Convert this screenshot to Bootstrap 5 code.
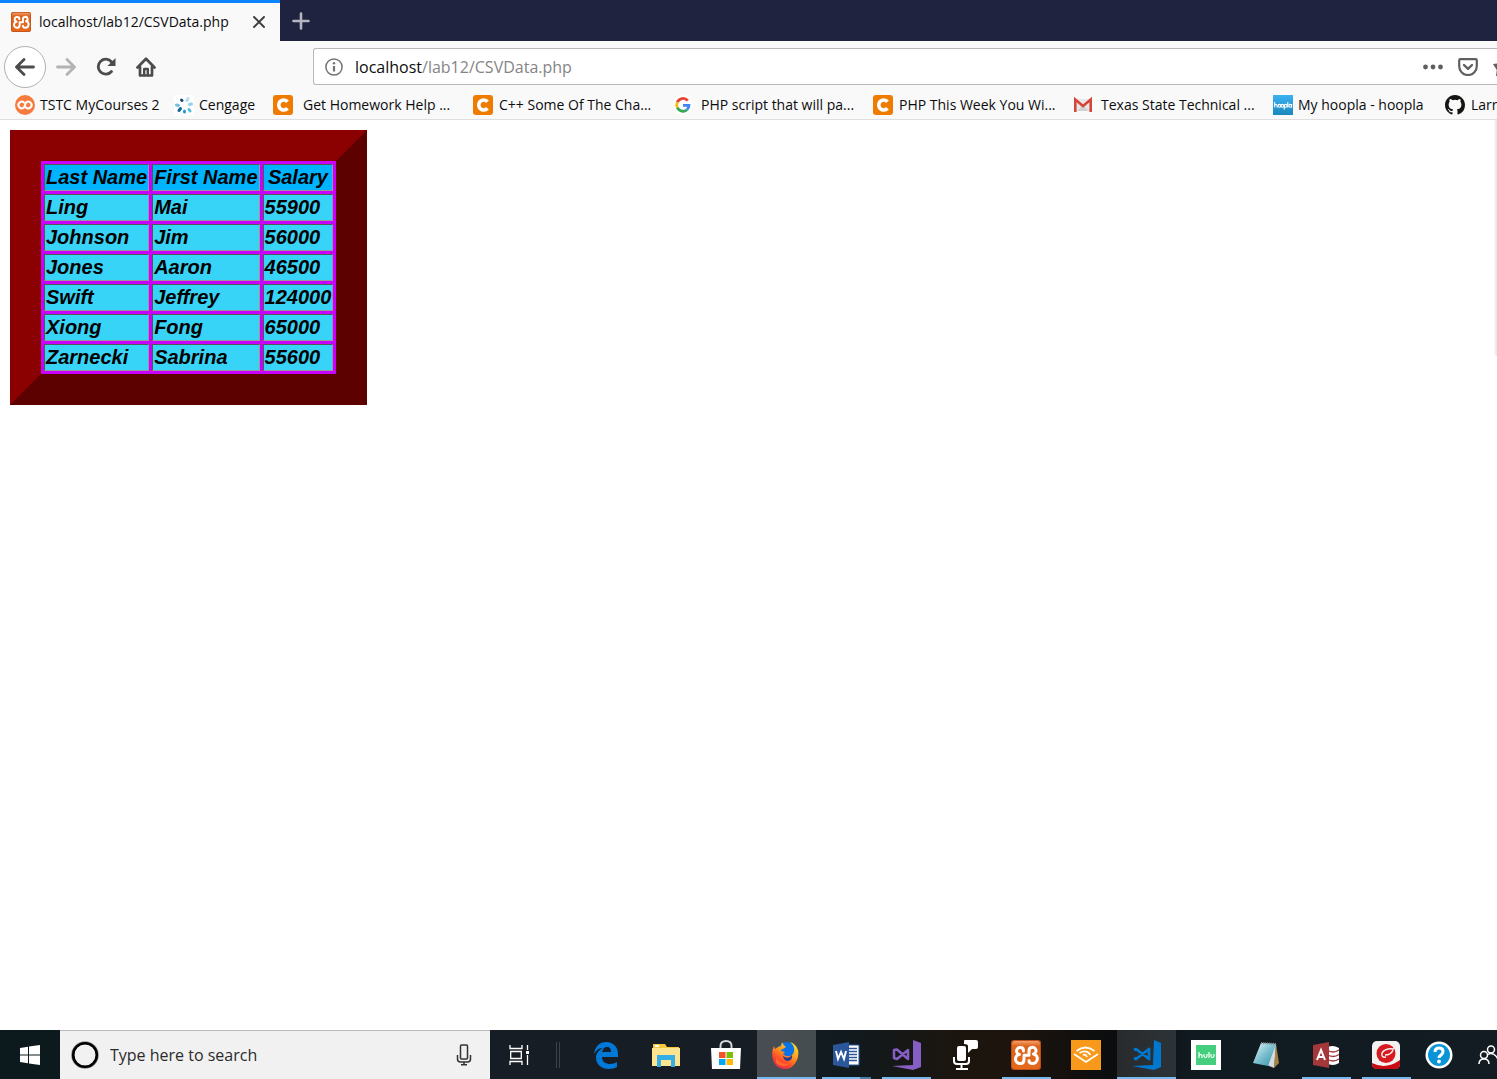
<!DOCTYPE html>
<html lang="en">
<head>
<meta charset="utf-8">
<meta name="viewport" content="width=device-width, initial-scale=1">
<title>localhost/lab12/CSVData.php</title>
<link href="https://cdn.jsdelivr.net/npm/bootstrap@5.3.0/dist/css/bootstrap.min.css" rel="stylesheet">
<style>
body{font-family:"Open Sans","Noto Sans",sans-serif;font-size:14px;line-height:20px;color:#0c0c0d;background:#fff}
button{border:0;background:none;padding:0;color:inherit;flex-shrink:0}
button,.bm,.ident{display:flex;align-items:center}
button{justify-content:center}
svg{display:block;flex-shrink:0}
.tabstrip{height:41px;background:#202340}
.tab{width:280px;background:#f9f9fa;border-top:3px solid #0a84ff;padding:0 9px 1px 11px}
.tab-label{margin-left:8px;flex-grow:1;white-space:nowrap}
.tab-close{width:24px;height:24px}
.newtab{width:42px;color:#b4b5c0}
.toolbar{height:49px;background:#f9f9fa;padding:2px 0 0 4px;color:#4c4c4f}
.back{width:42px;height:42px;border:1px solid #b1b1b1;border-radius:50%;background:#fff}
.nav40{width:40px;height:40px}
.urlbar{height:37px;margin-left:147px;border:1px solid #b9b9ba;border-right:0;border-radius:3px 0 0 3px;background:#fff;padding-left:11px;font-size:16px}
.ident{margin:0 12px 0 0;color:#737373}
.urlbar label{color:#0c0c0d}
.urlbar input{border:0;outline:0;padding:0;color:#858585;background:none;min-width:0}
.act{width:35px;height:35px;color:#5f5f61}
.star{width:12px;overflow:hidden;justify-content:flex-end}
.bookmarks{height:30px;background:#f9f9fa;border-bottom:1px solid #dedede;padding-left:15px;overflow:hidden}
.bm{width:200px;flex-shrink:0;gap:6px;color:#0c0c0d;text-decoration:none;white-space:nowrap}
.bm-tstc{width:159px;gap:5px}
.bm-ceng{width:99px;gap:5px}
.bm-hoop{width:172px;gap:5px}
.bm-wide{gap:8px}
.bm-get{gap:10px}
.edge-shade{position:absolute;top:0;right:0;width:3px;height:236px;background:linear-gradient(90deg,#fafafa,#e4e4e4);border-radius:0 0 0 3px}
.salaries{margin:10px;width:auto;border:31px solid;border-color:#8b0000 #5c0000 #5c0000 #8b0000;border-collapse:separate;border-spacing:3px;background:#c800ff;color:#000;font:italic bold 20px/23px "Liberation Sans",Arial,sans-serif}
.salaries th,.salaries td{border:1px solid;border-color:#555 #999 #999 #555;padding:1px;background:#38d4f7}
.salaries th{background:#00b3ff;text-align:center}
.taskbar{height:49px;color:#fff;background:linear-gradient(90deg,#0d1a1d 0,#0d1a1d 60px,#171d25 490px,#161d24 740px,#111a1e 850px,#1c150e 960px,#1c140d 1020px,#0b0d0f 1110px,#101b21 1200px,#121c22 100%);overflow:hidden}
.start{width:60px}
.find{width:430px;background:#f1f1f1;border-top:1px solid #b9b9b9;padding:0 18px 0 11px;color:#2b2b2b}
.find input{border:0;outline:0;background:none;padding:0;margin-left:11px;flex-grow:1;min-width:0;font-size:16px;color:#2b2b2b}
.find input::placeholder{color:#2b2b2b;opacity:1}
.view{width:60px}
.sep{width:4px;height:26px;border:1px solid #3d4349;border-width:0 1px;margin:0 16px 0 6px;flex-shrink:0}
.app{width:60px;position:relative}
.app.front::before{content:"";position:absolute;inset:0 0 0 1px;background:rgba(255,255,255,.22)}
.app.lit::before{content:"";position:absolute;inset:0 0 0 1px;background:rgba(255,255,255,.12)}
.app.front::after,.app.lit::after,.app.open::after{content:"";position:absolute;left:6px;right:5px;bottom:0;height:2px;background:#76b9ed}
.app.front::after,.app.lit::after{left:1px;right:0}
.app.multi::after{background:linear-gradient(90deg,#76b9ed 38px,#4c7ea3 38px)}
.app svg{position:relative}
.app.assist{width:46px}
</style>
<script src="https://cdn.jsdelivr.net/npm/bootstrap@5.3.0/dist/js/bootstrap.bundle.min.js"></script>
</head>
<body class="d-flex flex-column vh-100 overflow-hidden">
<svg width="0" height="0" class="position-absolute" aria-hidden="true">
<defs>
<linearGradient id="or" x2="0" y2="1"><stop stop-color="#f4a06c"/><stop offset=".18" stop-color="#dc641c"/><stop offset="1" stop-color="#e7691b"/></linearGradient>
<linearGradient id="hb" x2="0" y2="1"><stop stop-color="#3bb2f2"/><stop offset="1" stop-color="#1b87bd"/></linearGradient>
<linearGradient id="fx" x1=".8" y1="0" x2=".2" y2="1"><stop stop-color="#ffe226"/><stop offset=".4" stop-color="#ff9a1e"/><stop offset=".7" stop-color="#ff4b2b"/><stop offset="1" stop-color="#e5205b"/></linearGradient>
<linearGradient id="np" x2="1" y2="1"><stop stop-color="#e5f4f7"/><stop offset=".5" stop-color="#7cc0d0"/><stop offset="1" stop-color="#2e8ba4"/></linearGradient>
<symbol id="xampp" viewBox="0 0 30 30"><rect width="30" height="30" rx="3" fill="#b8501a"/><rect x="1" y="1" width="28" height="28" rx="3" fill="url(#or)"/><path d="M12.500 11Q12.500 7.500 9.800 7.500A3.200 3.200 0 0 0 8.500 14.500A4.300 4.300 0 0 0 9.500 23.500Q13 23.500 13 19.500V15.300H18V11Q18 7.500 20.700 7.500A3.200 3.200 0 0 1 22.500 14A4.800 4.800 0 0 1 21.500 23.500Q18 23.500 18 20.500" fill="none" stroke="#fff" stroke-width="3" stroke-linecap="round" stroke-linejoin="round"/></symbol>
<symbol id="chegg" viewBox="0 0 20 20"><rect width="20" height="20" rx="3" fill="#ef7b00"/><path d="M14.500 6.700A5 5 0 1 0 14.500 13.300" fill="none" stroke="#fff" stroke-width="3.600"/></symbol>
</defs></svg>

<header>
<div class="tabstrip d-flex">
<div class="tab d-flex align-items-center">
<svg width="20" height="20"><use href="#xampp"/></svg>
<span class="tab-label">localhost/lab12/CSVData.php</span>
<button class="tab-close" aria-label="Close tab"><svg width="12" height="12" viewBox="0 0 12 12" stroke="#3d3d40" stroke-width="1.900" stroke-linecap="round"><path d="M1 1l10 10M11 1L1 11"/></svg></button>
</div>
<button class="newtab" aria-label="New tab"><svg width="18" height="18" viewBox="0 0 18 18" stroke="currentColor" stroke-width="2.600" stroke-linecap="round"><path d="M9 1.500v15M1.500 9h15"/></svg></button>
</div>

<nav class="toolbar d-flex align-items-center">
<button class="back" aria-label="Back"><svg width="20" height="18" viewBox="0 0 20 18" fill="none" stroke="currentColor" stroke-width="2.800" stroke-linecap="round" stroke-linejoin="round"><path d="M18.500 9H2M9 1.500L1.500 9 9 16.500"/></svg></button>
<button class="nav40" aria-label="Forward"><svg width="20" height="18" viewBox="0 0 20 18" fill="none" stroke="#b3b3b4" stroke-width="2.800" stroke-linecap="round" stroke-linejoin="round"><path d="M1.500 9H18M11 1.500L18.500 9 11 16.500"/></svg></button>
<button class="nav40" aria-label="Reload"><svg width="20" height="20" viewBox="0 0 20 20" fill="none" stroke="currentColor"><path d="M15.500 14.500A7.500 7.500 0 1 1 15.600 5" stroke-width="2.800" stroke-linecap="round"/><path d="M19.500 1v8h-8z" fill="currentColor" stroke="none"/></svg></button>
<button class="nav40" aria-label="Home"><svg width="20" height="20" viewBox="0 0 20 20" fill="none" stroke="currentColor" stroke-width="2.700" stroke-linecap="round" stroke-linejoin="round"><path d="M1.500 10.500L10 1.700l8.500 8.800M4 10v8.500h12V10"/><path d="M8.200 18v-6h3.600v6" stroke-width="2.400"/></svg></button>
<div class="urlbar d-flex align-items-center flex-grow-1">
<span class="ident"><svg width="18" height="18" viewBox="0 0 18 18" fill="none" stroke="currentColor" stroke-width="1.500"><circle cx="9" cy="9" r="8.100"/><path d="M9 8v5.500" stroke-width="2.200"/><circle cx="9" cy="5.200" r="1.200" fill="currentColor" stroke="none"/></svg></span>
<label for="address">localhost</label>
<input id="address" class="flex-grow-1" type="text" value="/lab12/CSVData.php">
<button class="act" aria-label="Page actions"><svg width="20" height="6" viewBox="0 0 20 6" fill="currentColor"><circle cx="2.500" cy="3" r="2.400"/><circle cx="10" cy="3" r="2.400"/><circle cx="17.500" cy="3" r="2.400"/></svg></button>
<button class="act" aria-label="Save to Pocket"><svg width="20" height="18" viewBox="0 0 20 18" fill="none" stroke="currentColor" stroke-width="2.200" stroke-linecap="round" stroke-linejoin="round"><path d="M2.300 1.200h15.400q1.100 0 1.100 1.100v5.900a8.800 8.800 0 0 1-17.600 0V2.300q0-1.100 1.100-1.100z"/><path d="M6 7l4 3.800L14 7" stroke-width="2.400"/></svg></button>
<button class="act star" aria-label="Bookmark this page"><svg width="4" height="20" viewBox="0 0 4 20" fill="#5f5f61"><path d="M0 7l4-.5V19H3l.8-6z"/></svg></button>
</div>
</nav>

<div class="bookmarks d-flex align-items-center">
<a class="bm bm-tstc" href="#"><svg width="20" height="20" viewBox="0 0 20 20"><circle cx="10" cy="10" r="10" fill="#f77b3e"/><path d="M9 7.600A3.300 3.300 0 1 0 9 12.400L11 7.600A3.300 3.300 0 1 1 11 12.400" fill="none" stroke="#fff" stroke-width="2" stroke-linecap="round" stroke-linejoin="round"/></svg>TSTC MyCourses 2</a>
<a class="bm bm-ceng" href="#"><svg width="20" height="20" viewBox="0 0 20 20"><path fill="#fff" d="M0 0h20v20H0z"/><g stroke-width="3" stroke-linecap="round"><path d="M5 15.500l1.500-2" stroke="#146b9d"/><path d="M10.500 17v-1" stroke="#2d9bd1"/><path d="M15 14.500l1 1.500" stroke="#59bbe0"/><path d="M15.500 9.500l2-.5" stroke="#8fd2ed"/><path d="M13 5.500l1-2" stroke="#b5def0"/><path d="M7.500 5l.5.500" stroke="#174f72"/><path d="M2.500 10l2 .5" stroke="#72bedd"/></g></svg>Cengage</a>
<a class="bm bm-get" href="#"><svg width="20" height="20"><use href="#chegg"/></svg>Get Homework Help ...</a>
<a class="bm" href="#"><svg width="20" height="20"><use href="#chegg"/></svg>C++ Some Of The Cha...</a>
<a class="bm bm-wide" href="#"><svg width="20" height="20" viewBox="0 0 20 20"><circle cx="10" cy="10" r="10" fill="#fff"/><g fill="none" stroke-width="2.800"><path d="M14.800 5.700A6.200 6.200 0 0 0 4.300 7.300" stroke="#ea4335"/><path d="M4.300 7.300a6.200 6.200 0 0 0 0 5.400" stroke="#fbbc05"/><path d="M4.300 12.700a6.200 6.200 0 0 0 9.700 2" stroke="#34a853"/><path d="M14 14.700a5.900 5.900 0 0 0 2-4.400h-6" stroke="#4285f4"/></g></svg>PHP script that will pa...</a>
<a class="bm" href="#"><svg width="20" height="20"><use href="#chegg"/></svg>PHP This Week You Wi...</a>
<a class="bm bm-wide" href="#"><svg width="20" height="20" viewBox="0 0 20 20"><path fill="#e8e8e8" d="M3 4h14v12H3z"/><path d="M4 16l6-6 6 6" fill="#d2d2d2"/><path d="M2.300 17V4.500L10 11l7.700-6.500V17" fill="none" stroke="#d5463a" stroke-width="2.600"/></svg>Texas State Technical ...</a>
<a class="bm bm-hoop" href="#"><svg width="20" height="20" viewBox="0 0 20 20"><path fill="url(#hb)" d="M0 0h20v20H0z"/><g fill="none" stroke="#fff" stroke-width="1.100"><path d="M1.700 7v5.500M1.700 10.500q1.500-2 2.500 0v2M14.800 7v5.500"/><circle cx="6.500" cy="10.800" r="1.400"/><circle cx="9.500" cy="10.800" r="1.400"/><circle cx="12.700" cy="10.800" r="1.400"/><path d="M11.300 10v4.500"/><circle cx="17.200" cy="10.800" r="1.400"/><path d="M18.600 9v3.500"/></g></svg>My hoopla - hoopla</a>
<a class="bm" href="#"><svg width="20" height="20" viewBox="0 0 16 16" fill="#161514"><path d="M8 0C3.580 0 0 3.580 0 8c0 3.540 2.290 6.530 5.470 7.590.4.070.55-.17.55-.38 0-.19-.01-.82-.01-1.490-2.010.37-2.530-.49-2.690-.94-.09-.23-.48-.94-.82-1.130-.28-.15-.68-.52-.01-.53.63-.01 1.080.58 1.230.82.72 1.210 1.870.87 2.330.66.07-.52.28-.87.51-1.070-1.780-.2-3.640-.89-3.640-3.950 0-.87.31-1.590.82-2.150-.08-.2-.36-1.020.08-2.120 0 0 .67-.21 2.200.82a7.400 7.400 0 0 1 4 0c1.530-1.040 2.200-.82 2.200-.82.44 1.100.16 1.920.08 2.120.51.56.82 1.270.82 2.150 0 3.070-1.870 3.750-3.650 3.950.29.25.54.73.54 1.480 0 1.070-.01 1.930-.01 2.200 0 .21.15.46.55.38A8 8 0 0 0 16 8c0-4.420-3.580-8-8-8z"/></svg>Larry</a>
</div>
</header>

<main class="flex-grow-1 position-relative">
<div class="edge-shade"></div>
<table class="salaries">
<thead><tr><th scope="col">Last Name</th><th scope="col">First Name</th><th scope="col">Salary</th></tr></thead>
<tbody>
<tr><td>Ling</td><td>Mai</td><td>55900</td></tr>
<tr><td>Johnson</td><td>Jim</td><td>56000</td></tr>
<tr><td>Jones</td><td>Aaron</td><td>46500</td></tr>
<tr><td>Swift</td><td>Jeffrey</td><td>124000</td></tr>
<tr><td>Xiong</td><td>Fong</td><td>65000</td></tr>
<tr><td>Zarnecki</td><td>Sabrina</td><td>55600</td></tr>
</tbody>
</table>
</main>

<footer class="taskbar d-flex flex-shrink-0">
<button class="start" aria-label="Start"><svg width="20" height="20" viewBox="0 0 20 20" fill="#fff"><path d="M0 3l8-1.200v7.700H0zM9 1.600L20 0v9.500H9zM0 10.500h8v7.700L0 17zM9 10.500h11V20L9 18.400z"/></svg></button>
<div class="find d-flex align-items-center flex-shrink-0">
<svg width="28" height="28" viewBox="0 0 28 28" fill="none"><circle cx="14" cy="14" r="12.300" stroke="#8b8b8b" stroke-width="3"/><circle cx="14" cy="14" r="11.800" stroke="#000" stroke-width="2.600"/></svg>
<input type="text" placeholder="Type here to search" aria-label="Type here to search">
<button aria-label="Voice search"><svg width="16" height="22" viewBox="0 0 16 22" fill="none" stroke="#333" stroke-width="1.500"><rect x="4.500" y="1" width="7" height="14" rx="1"/><path d="M1.500 11v4q0 3 3 3h7q3 0 3-3v-4M8 18v3M5 20.700h6"/></svg></button>
</div>
<button class="view" aria-label="Task view"><svg width="22" height="20" viewBox="0 0 22 20" fill="none" stroke="#fff" stroke-width="1.300"><path d="M1 0v3.500h12V0M1 20v-3.500h12V20M1.700 6.500h10.600v7H1.700zM18.500 0v5M18.500 10v10"/><path d="M17 6h3v3h-3z" fill="#fff" stroke="none"/></svg></button>
<span class="sep align-self-center"></span>
<button class="app" aria-label="Edge"><svg width="26" height="28" viewBox="0 0 26 28" fill="#0078d7"><path d="M1 13C2 5 7 1 13 1c8 0 12 6 12 12v3H9c0 5 4 7 8 7 3 0 5-1 7-2v5c-2 1-5 2-8 2C8 28 3 23 3 17c0-5 3-8 7-10-5 0-7 3-9 6zM9 11h9c0-3-1-5-4-5s-4 2-5 5z"/></svg></button>
<button class="app" aria-label="File Explorer"><svg width="28" height="24" viewBox="0 0 28 24"><path d="M1 1h12l2 3h12v19H1z" fill="#f5c93b"/><path d="M3 2h4v2H3z" fill="#fff"/><path d="M0 5h28v18H0z" fill="#fde491"/><path d="M5 24V12h18v12h-4v-7H9v7z" fill="#35aee5"/></svg></button>
<button class="app" aria-label="Microsoft Store"><svg width="30" height="30" viewBox="0 0 30 30"><path d="M9.500 10V6q0-5 5.500-5t5.500 5v4" fill="none" stroke="#d4d6d8" stroke-width="2"/><path d="M0 8h30l-1 21H1z" fill="#fff"/><path d="M8 12h6.500v6H8z" fill="#f35325"/><path d="M15.500 12H22v6h-6.500z" fill="#81bc06"/><path d="M8 19h6.500v6H8z" fill="#05a6f0"/><path d="M15.500 19H22v6h-6.500z" fill="#ffba08"/></svg></button>
<button class="app front" aria-label="Firefox"><svg width="28" height="28" viewBox="0 0 28 28"><circle cx="15" cy="11" r="10" fill="#0a73e8"/><path d="M2 5l1 3 3-2 3-1 1-4q1 3 4 5l-3 2q-2 0-2 2l4 1-2 2q4 4 9 1 3-3 2-7-1-4-4-6 6 2 8 8 1 5-1 10-4 9-12 9Q4 28 1 19-1 11 2 5z" fill="url(#fx)"/><path d="M11 15q5 4 9-1 1 5-4 6-4 0-5-5z" fill="#2b3b8f"/><path d="M4 16q5 8 13 7-7 5-13-1z" fill="#ff6a2a"/></svg></button>
<button class="app open multi" aria-label="Word"><svg width="28" height="28" viewBox="0 0 28 28"><path d="M14 4h13v20H14z" fill="#fff" stroke="#2b579a"/><path d="M16 7.500h9M16 10.500h9M16 13.500h9M16 16.500h9M16 19.500h9" stroke="#2b579a" stroke-width="1.500"/><path d="M1 4l16-3v26L1 24z" fill="#2b579a"/><path d="M4 10l2 8 3-7 3 7 2-8" fill="none" stroke="#fff" stroke-width="1.900"/></svg></button>
<button class="app open" aria-label="Visual Studio"><svg width="30" height="30" viewBox="0 0 30 30" fill="#865fc5"><path d="M22 0l8 3v24l-8 3L1 26l21-1z"/><path d="M3 10v8l3 1 11-9v9L6 9.500z" fill="none" stroke="#865fc5" stroke-width="2.500" stroke-linejoin="round"/></svg></button>
<button class="app" aria-label="Voice recorder"><svg width="28" height="30" viewBox="0 0 28 30"><rect x="5" y="6" width="9" height="15" rx="2" fill="#fff"/><path d="M2 17v4q0 3 3 3h9q3 0 3-3v-4M9.500 24v5M4 29h12" fill="none" stroke="#fff" stroke-width="2"/><path d="M13 0h11q2 0 2 2v5q0 2-2 2h-4l-4 4V9.500V6q0-2-4-2V1q0-1 1-1z" fill="#fff"/></svg></button>
<button class="app open" aria-label="XAMPP"><svg width="30" height="30"><use href="#xampp"/></svg></button>
<button class="app" aria-label="Audible"><svg width="30" height="30" viewBox="0 0 30 30"><path fill="#f8991c" d="M0 0h30v30H0z"/><path d="M3 14l12 8 12-8M5.500 11q9-7 18 0M8.500 13q7-4 11 2M12 15q3-1 4 2" fill="none" stroke="#fff" stroke-width="1.800"/></svg></button>
<button class="app lit" aria-label="Visual Studio Code"><svg width="30" height="30" viewBox="0 0 30 30" fill="#0078d0"><path d="M23 0l7 3v24l-7 3L1 26l21-1z"/><path d="M3 10l2-1 13 10V9L5 19l-2-1" fill="none" stroke="#0078d0" stroke-width="2.800" stroke-linejoin="round"/></svg></button>
<button class="app" aria-label="Hulu"><svg width="30" height="30" viewBox="0 0 30 30"><path fill="#fff" d="M0 0h30v30H0z"/><path fill="#45ce7d" d="M5 5h20v20H5z"/><path d="M8 12v6M8 15.500q2-2 3 0V18M13 14v2q0 1.500 1.500 1.500T16 16v-2M18 12v6M20 14v2q0 1.500 1.500 1.500T23 16v-2" fill="none" stroke="#fff" stroke-width="1.200"/></svg></button>
<button class="app" aria-label="Notepad"><svg width="30" height="28" viewBox="0 0 30 28"><path d="M25 3l3 19-5 5z" fill="#a5813f"/><path d="M10 2l15 1-2 24-7-3z" fill="#d4dadd"/><path d="M10 2l15 1-8 22-15-3z" fill="url(#np)"/><path d="M10 2l15 1" stroke="#838b8e" stroke-width="2" stroke-dasharray="1 1"/></svg></button>
<button class="app open" aria-label="Access"><svg width="28" height="28" viewBox="0 0 28 28"><path d="M14 7q6-4 13 0v15q-6 4-13 0z" fill="#fff"/><path d="M15 9q6 4 12 0M15 13.500q6 4 12 0M15 18q6 4 12 0" fill="none" stroke="#a4373a" stroke-width="1.500"/><path d="M1 4l16-3v26L1 24z" fill="#a4373a"/><path d="M5 19l4-10 4 10M6.500 16h5" fill="none" stroke="#fff" stroke-width="2"/></svg></button>
<button class="app open" aria-label="Trend Micro"><svg width="28" height="28" viewBox="0 0 28 28"><rect width="28" height="28" rx="5" fill="#f4f2f0"/><path d="M0 22q14 7 28-3v4q0 5-5 5H5q-5 0-5-5z" fill="#c80a12"/><circle cx="14" cy="12.500" r="9.500" fill="#d71920"/><path d="M10 12q3-5 12-4M13 14q6 0 8-5M10 12q-1 5 4 4" fill="none" stroke="#f4f2f0" stroke-width="1.500"/></svg></button>
<button class="app assist" aria-label="Get help"><svg width="28" height="28" viewBox="0 0 28 28"><circle cx="14" cy="14" r="13.500" fill="#fff"/><circle cx="14" cy="14" r="11" fill="#0a94d8"/><path d="M10 11q0-4 4-4t4 3.500q0 2-2 3.500t-2 3" fill="none" stroke="#fff" stroke-width="3"/><circle cx="14" cy="20.500" r="1.900" fill="#fff"/></svg></button>
<button class="people ps-3" aria-label="People"><svg width="22" height="20" viewBox="0 0 22 20" fill="none" stroke="#fff" stroke-width="1.500"><circle cx="6" cy="10" r="3.500"/><path d="M1 19q0-5 5-5t5 5"/><circle cx="13" cy="4.500" r="3.500"/><path d="M10 9.500q3-2 6 0t4 5"/></svg></button>
</footer>
</body>
</html>
